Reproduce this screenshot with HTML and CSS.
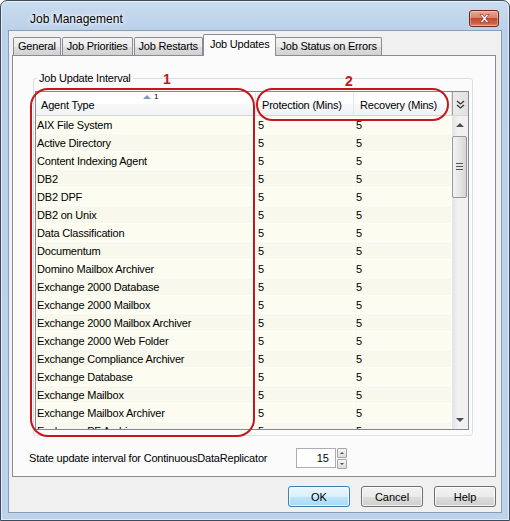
FILE: index.html
```html
<!DOCTYPE html>
<html lang="en">
<head>
  <meta charset="UTF-8">
  <title>Job Management</title>
  <link rel="stylesheet" href="styles.css">
</head>
<body>
  <div class="window">
    <div class="titlebar">
      <span class="title">Job Management</span>
      <button class="close" aria-label="Close">
        <svg width="11" height="9" viewBox="0 0 11 9"><path d="M1 0.5h2.5L5.5 3 7.5 0.5H10L6.8 4.5 10 8.5H7.5L5.5 6 3.5 8.5H1L4.2 4.5z" fill="#fff" stroke="#7a2a1e" stroke-width="0.6"/></svg>
      </button>
    </div>

    <div class="client">
      <div class="tabs">
        <div class="tab">General</div>
        <div class="tab">Job Priorities</div>
        <div class="tab">Job Restarts</div>
        <div class="tab active">Job Updates</div>
        <div class="tab">Job Status on Errors</div>
      </div>

      <div class="panel">
        <fieldset class="group">
          <legend>Job Update Interval</legend>
          <div class="lv">
            <div class="lv-head">
              <div class="hcol agent">Agent Type<span class="sort"><i></i>1</span></div>
              <div class="hcol num">Protection (Mins)</div>
              <div class="hcol num">Recovery (Mins)</div>
              <div class="hmenu">
                <svg width="9" height="9" viewBox="0 0 9 9"><path d="M1 1l3.5 3 3.5-3M1 5l3.5 3 3.5-3" fill="none" stroke="#333" stroke-width="1.3"/></svg>
              </div>
            </div>
            <div class="lv-body">
              <div class="rows">
                <div class="row"><span>AIX File System</span><span>5</span><span>5</span></div>
                <div class="row"><span>Active Directory</span><span>5</span><span>5</span></div>
                <div class="row"><span>Content Indexing Agent</span><span>5</span><span>5</span></div>
                <div class="row"><span>DB2</span><span>5</span><span>5</span></div>
                <div class="row"><span>DB2 DPF</span><span>5</span><span>5</span></div>
                <div class="row"><span>DB2 on Unix</span><span>5</span><span>5</span></div>
                <div class="row"><span>Data Classification</span><span>5</span><span>5</span></div>
                <div class="row"><span>Documentum</span><span>5</span><span>5</span></div>
                <div class="row"><span>Domino Mailbox Archiver</span><span>5</span><span>5</span></div>
                <div class="row"><span>Exchange 2000 Database</span><span>5</span><span>5</span></div>
                <div class="row"><span>Exchange 2000 Mailbox</span><span>5</span><span>5</span></div>
                <div class="row"><span>Exchange 2000 Mailbox Archiver</span><span>5</span><span>5</span></div>
                <div class="row"><span>Exchange 2000 Web Folder</span><span>5</span><span>5</span></div>
                <div class="row"><span>Exchange Compliance Archiver</span><span>5</span><span>5</span></div>
                <div class="row"><span>Exchange Database</span><span>5</span><span>5</span></div>
                <div class="row"><span>Exchange Mailbox</span><span>5</span><span>5</span></div>
                <div class="row"><span>Exchange Mailbox Archiver</span><span>5</span><span>5</span></div>
                <div class="row"><span>Exchange PF Archiver</span><span>5</span><span>5</span></div>
              </div>
              <div class="vscroll">
                <div class="sb-btn"><i class="up"></i></div>
                <div class="thumb"><b></b><b></b><b></b></div>
                <div class="sb-fill"></div>
                <div class="sb-btn"><i class="down"></i></div>
              </div>
            </div>
          </div>
        </fieldset>

        <div class="state-row">
          <label for="state-interval">State update interval for ContinuousDataReplicator</label>
          <div class="spin">
            <input id="state-interval" type="text" value="15">
            <div class="spin-btns">
              <div class="spin-btn"><i class="up"></i></div>
              <div class="spin-btn"><i class="down"></i></div>
            </div>
          </div>
        </div>
      </div>

      <div class="buttons">
        <button class="btn default">OK</button>
        <button class="btn">Cancel</button>
        <button class="btn">Help</button>
      </div>
    </div>

    <!-- callout marks -->
    <div class="callout c1"></div>
    <div class="callout c2"></div>
    <span class="callout-num n1">1</span>
    <span class="callout-num n2">2</span>
  </div>
</body>
</html>
```

FILE: styles.css
```css
:root {
  --frame: #bdd3eb;
  --face: #f0f0f0;
  --tab-border: #898c95;
  --lv-border: #828790;
  --mark: #c4161c;
}

* {
  box-sizing: border-box;
}

body {
  margin: 0;
  width: 510px;
  height: 521px;
  background: #ffffff;
  font-family: "Liberation Sans", Arial, sans-serif;
  font-size: 11px;
  letter-spacing: -0.2px;
  color: #000;
  overflow: hidden;
}

.window {
  position: relative;
  width: 510px;
  height: 521px;
  display: flex;
  flex-direction: column;
  padding: 0 7px 7px;
  border: 1px solid #3d4b5c;
  border-radius: 7px 7px 0 0;
  background: linear-gradient(#cadcef, #bad1ea 30px, var(--frame));
  box-shadow: inset 0 0 0 1px rgba(255, 255, 255, 0.55);
}

/* Title bar */
.titlebar {
  height: 29px;
  display: flex;
  justify-content: space-between;
  align-items: flex-start;
}

.title {
  padding: 11px 0 0 22px;
  font-size: 12px;
  letter-spacing: 0;
  text-shadow: 0 0 6px #fff, 0 0 3px #fff;
}

.close {
  width: 30px;
  height: 17px;
  margin: 9px 3px 0 0;
  padding: 0;
  display: flex;
  align-items: center;
  justify-content: center;
  border: 1px solid #6b2a20;
  border-radius: 3px;
  background: linear-gradient(#eba792, #d9826c 45%, #c6472f 50%, #cf6447 85%, #e2937a);
  box-shadow: inset 0 0 0 1px rgba(255, 220, 200, 0.45);
}

/* Client area */
.client {
  flex: 1;
  display: flex;
  flex-direction: column;
  padding: 3px 5px 0 3px;
  background: var(--face);
  border: 1px solid #8a9db5;
}

.tabs {
  display: flex;
  align-items: flex-end;
  height: 22px;
  margin: 0 0 -1px 1px;
  position: relative;
  z-index: 1;
}

.tab {
  height: 18px;
  margin: 0 1px 1px 0;
  padding: 0 4px;
  line-height: 17px;
  border: 1px solid var(--tab-border);
  border-bottom: none;
  border-radius: 2px 2px 0 0;
  background: linear-gradient(#f3f3f3, #ebebeb 50%, #dedede 51%, #d2d2d2);
  white-space: nowrap;
}

.tab.active {
  height: 22px;
  margin: 0 -1px 0 -1px;
  padding: 0 6px;
  line-height: 18px;
  background: #fbfbfb;
}

.panel {
  height: 422px;
  display: flex;
  flex-direction: column;
  border: 1px solid var(--tab-border);
  background: #fbfbfb;
}

/* Group box */
.group {
  width: 440px;
  height: 364px;
  margin: 16px 0 0 20px;
  padding: 7px 1px 1px 1px;
  border: 1px solid #d5dfe5;
  border-radius: 3px;
  box-shadow: 1px 1px 0 #fff;
}

.group legend {
  margin-left: 2px;
  padding: 0 2px;
}

/* List view */
.lv {
  width: 434px;
  height: 339px;
  display: flex;
  flex-direction: column;
  border: 1px solid var(--lv-border);
  background: #fff;
}

.lv-head {
  height: 24px;
  flex: none;
  display: flex;
  border-bottom: 1px solid #d5d5d5;
  background: linear-gradient(#ffffff, #ffffff 50%, #f7f8fa 51%, #f1f2f4);
}

.hcol {
  position: relative;
  display: flex;
  align-items: center;
  padding: 3px 0 0 5px;
  border-right: 1px solid #e3e5e8;
  white-space: nowrap;
}

.hcol.agent {
  width: 220px;
}

.hcol.num {
  width: 98px;
  padding-left: 6px;
}

.sort {
  position: absolute;
  top: 0;
  left: 107px;
  display: flex;
  align-items: center;
  gap: 3px;
  font-size: 8px;
  letter-spacing: 0;
}

.sort i {
  width: 0;
  height: 0;
  border-left: 4px solid transparent;
  border-right: 4px solid transparent;
  border-bottom: 4px solid #7c9bb8;
}

.hmenu {
  width: 16px;
  display: flex;
  align-items: center;
  justify-content: center;
  padding-top: 2px;
  border-left: 1px solid #a0a0a0;
  background: linear-gradient(90deg, #ececec, #e0e0e0);
}

.lv-body {
  flex: 1;
  display: flex;
  overflow: hidden;
}

.rows {
  width: 416px;
  overflow: hidden;
}

.row {
  height: 18px;
  display: flex;
  line-height: 18px;
  border-bottom: 1px solid #ffffff;
  background: #fcfcf1;
}

.row:nth-child(even) {
  background: #f8f8ec;
}

.row span {
  padding-left: 1px;
  border-right: 1px solid #ffffff;
  white-space: nowrap;
  overflow: hidden;
}

.row span:first-child {
  width: 220px;
}

.row span + span {
  width: 98px;
  padding-left: 2px;
}

/* Vertical scrollbar */
.vscroll {
  width: 16px;
  display: flex;
  flex-direction: column;
  background: linear-gradient(90deg, #e3e3e3, #f2f2f2 40%, #f0f0f0);
}

.sb-btn {
  height: 18px;
  display: flex;
  align-items: center;
  justify-content: center;
}

.sb-fill {
  flex: 1;
}

.thumb {
  height: 62px;
  margin: 2px 1px 0 0;
  display: flex;
  flex-direction: column;
  align-items: center;
  justify-content: center;
  gap: 1px;
  border: 1px solid #979797;
  border-radius: 2px;
  background: linear-gradient(90deg, #f3f3f3, #e6e6e6 50%, #d6d6d6);
}

.thumb b {
  width: 7px;
  height: 2px;
  border-top: 1px solid #555;
  border-bottom: 1px solid #e8e8e8;
}

i.up,
i.down {
  width: 0;
  height: 0;
  border-left: 4px solid transparent;
  border-right: 4px solid transparent;
}

i.up {
  border-bottom: 4px solid #4d4d4d;
}

i.down {
  border-top: 4px solid #4d4d4d;
}

/* State update interval */
.state-row {
  display: flex;
  align-items: center;
  margin: 12px 0 0 16px;
}

.state-row label {
  width: 267px;
  padding-bottom: 2px;
}

.spin {
  display: flex;
  gap: 1px;
}

.spin input {
  width: 40px;
  height: 20px;
  padding: 0 6px 0 0;
  border: 1px solid #abadb3;
  background: #fff;
  font: inherit;
  text-align: right;
}

.spin-btns {
  display: flex;
  flex-direction: column;
  gap: 1px;
}

.spin-btn {
  width: 10px;
  height: 10px;
  display: flex;
  align-items: center;
  justify-content: center;
  border: 1px solid #a5a5a5;
  border-radius: 1px;
  background: linear-gradient(#f6f6f6, #dcdcdc);
}

.spin-btn i.up,
.spin-btn i.down {
  border-left-width: 2px;
  border-right-width: 2px;
}

.spin-btn i.up {
  border-bottom-width: 2px;
}

.spin-btn i.down {
  border-top-width: 2px;
}

/* Dialog buttons */
.buttons {
  display: flex;
  justify-content: flex-end;
  gap: 11px;
  margin-top: 9px;
}

.btn {
  width: 62px;
  height: 21px;
  padding: 0;
  font: inherit;
  letter-spacing: 0;
  border: 1px solid #707070;
  border-radius: 3px;
  background: linear-gradient(#f2f2f2, #ebebeb 50%, #dddddd 51%, #cfcfcf);
  box-shadow: inset 0 0 0 1px rgba(255, 255, 255, 0.7);
}

.btn.default {
  border-color: #3c7fb1;
  background: linear-gradient(#eaf6fd, #d9f0fc 50%, #bee6fd 51%, #a7d9f5);
}

/* Red callout marks drawn over the list */
.callout {
  position: absolute;
  border: 2px solid var(--mark);
  pointer-events: none;
}

.c1 {
  left: 29px;
  top: 87px;
  width: 225px;
  height: 349px;
  border-radius: 18px;
}

.c2 {
  left: 255px;
  top: 87px;
  width: 193px;
  height: 33px;
  border-radius: 17px;
}

.callout-num {
  position: absolute;
  font-size: 14px;
  font-weight: bold;
  letter-spacing: 0;
  color: var(--mark);
}

.n1 {
  left: 162px;
  top: 70px;
}

.n2 {
  left: 344px;
  top: 72px;
}
```
